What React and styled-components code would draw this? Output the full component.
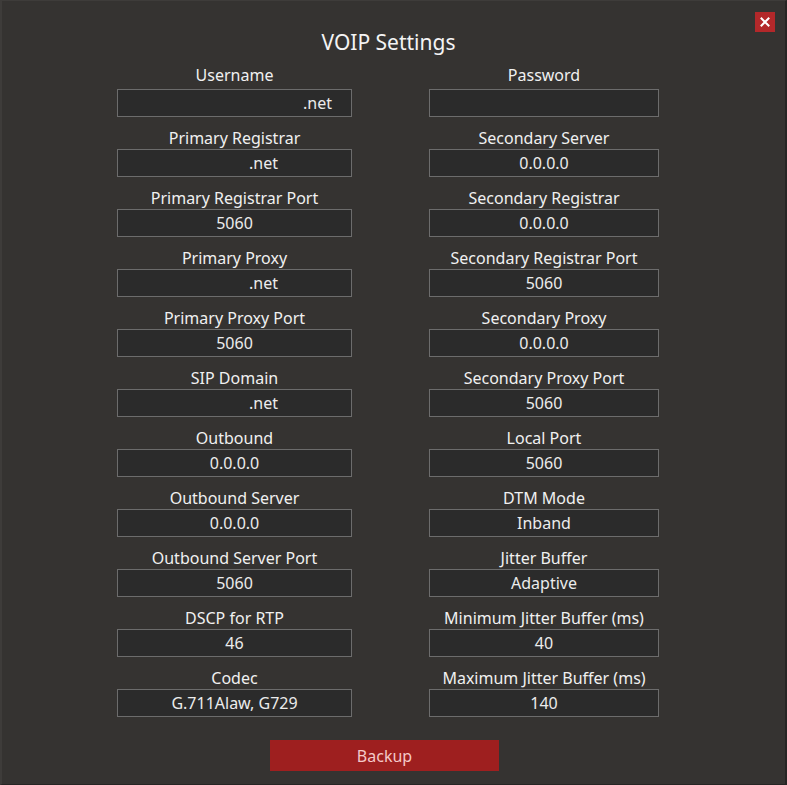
import React from "react";
import styled, { createGlobalStyle } from "styled-components";

const Global = createGlobalStyle`
  html, body { margin: 0; padding: 0; background: #353331; }
  body { font-family: "Noto Sans", "Open Sans", sans-serif; color: #f2f2f2; }
`;

const Window = styled.div`
  position: relative;
  width: 787px;
  height: 785px;
  box-sizing: border-box;
  background: #353331;
  border-left: 2px solid #3e3c3a;
  border-top: 1px solid #3e3c3a;
  border-right: 2px solid #262524;
  border-bottom: 1px solid #262524;
  overflow: hidden;
`;

const Title = styled.h1`
  margin: 0 0 0 -10px;
  padding-top: 26px;
  height: 30px;
  line-height: 30px;
  text-align: center;
  font-size: 21px;
  font-weight: 400;
  color: #f4f4f4;
`;

const Close = styled.button`
  position: absolute;
  top: 11px;
  right: 10px;
  width: 20px;
  height: 20px;
  padding: 0;
  border: none;
  background: #b3282a;
  display: flex;
  align-items: center;
  justify-content: center;
  cursor: pointer;
`;

const Grid = styled.div`
  display: grid;
  grid-template-columns: 235px 230px;
  column-gap: 77px;
  row-gap: 10px;
  padding-left: 115px;
  margin-top: 10px;
`;

const Field = styled.div`
  display: flex;
  flex-direction: column;
  align-items: stretch;
`;

const Label = styled.div`
  text-align: center;
  font-size: 16px;
  line-height: 22px;
  color: #f0f0f0;
  margin-bottom: ${(p) => (p.$first ? 3 : 0)}px;
  margin-top: ${(p) => (p.$first ? -3 : 0)}px;
`;

const Box = styled.div`
  box-sizing: border-box;
  height: 28px;
  border: 1px solid #6c6c6c;
  background: #2b2b2b;
  display: flex;
  align-items: center;
  justify-content: center;
  font-size: 16px;
  color: #ececec;
  white-space: pre;
`;

const Hidden = styled.span`
  display: inline-block;
  width: ${(p) => p.$w}px;
`;

const Footer = styled.div`
  padding-left: 268px;
  margin-top: 23px;
`;

const BackupButton = styled.button`
  width: 229px;
  height: 31px;
  border: none;
  background: #9e1f1f;
  color: #f4c9c9;
  font-family: "Noto Sans", "Open Sans", sans-serif;
  font-size: 16px;
  cursor: pointer;
`;

const left = [
  ["Username", ".net", 166],
  ["Primary Registrar", ".net", 58],
  ["Primary Registrar Port", "5060"],
  ["Primary Proxy", ".net", 58],
  ["Primary Proxy Port", "5060"],
  ["SIP Domain", ".net", 58],
  ["Outbound", "0.0.0.0"],
  ["Outbound Server", "0.0.0.0"],
  ["Outbound Server Port", "5060"],
  ["DSCP for RTP", "46"],
  ["Codec", "G.711Alaw, G729"],
];

const right = [
  ["Password", ""],
  ["Secondary Server", "0.0.0.0"],
  ["Secondary Registrar", "0.0.0.0"],
  ["Secondary Registrar Port", "5060"],
  ["Secondary Proxy", "0.0.0.0"],
  ["Secondary Proxy Port", "5060"],
  ["Local Port", "5060"],
  ["DTM Mode", "Inband"],
  ["Jitter Buffer", "Adaptive"],
  ["Minimum Jitter Buffer (ms)", "40"],
  ["Maximum Jitter Buffer (ms)", "140"],
];

function Item({ label, value, pad, first }) {
  return (
    <Field>
      <Label $first={first}>{label}</Label>
      <Box>
        {pad ? <Hidden $w={pad} /> : null}
        {value}
      </Box>
    </Field>
  );
}

export default function App() {
  const rows = [];
  left.forEach((l, i) => {
    const r = right[i];
    rows.push(<Item key={"l" + i} label={l[0]} value={l[1]} pad={l[2]} first={i === 0} />);
    rows.push(<Item key={"r" + i} label={r[0]} value={r[1]} pad={r[2]} first={i === 0} />);
  });
  return (
    <Window>
      <Global />
      <Close aria-label="close">
        <svg width="10" height="10" viewBox="0 0 10 10">
          <path d="M1.5 1.5 L8.5 8.5 M8.5 1.5 L1.5 8.5" stroke="#fff" strokeWidth="2" strokeLinecap="square" />
        </svg>
      </Close>
      <Title>VOIP Settings</Title>
      <Grid>{rows}</Grid>
      <Footer>
        <BackupButton>Backup</BackupButton>
      </Footer>
    </Window>
  );
}
